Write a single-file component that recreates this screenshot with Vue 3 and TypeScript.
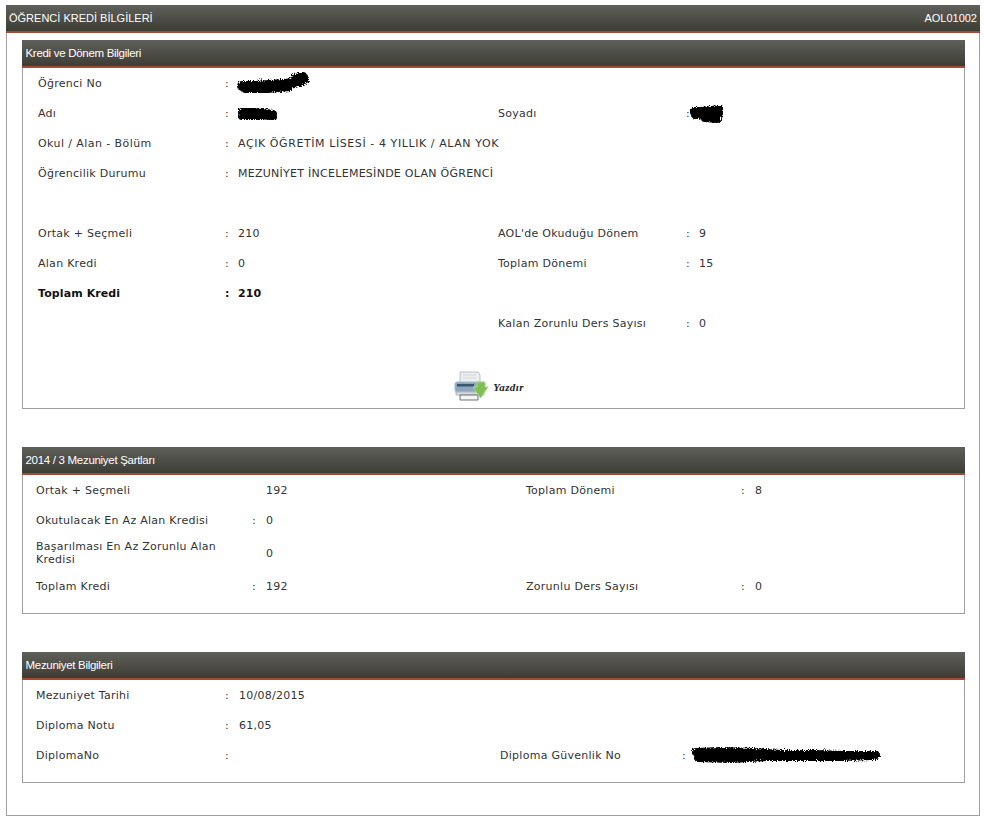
<script setup lang="ts">
interface Cell {
    label?: string;
    colon?: boolean;
    value?: string;
    blob?: string;
}
interface Row {
    left?: Cell;
    right?: Cell;
    bold?: boolean;
    tall?: boolean;
    wide?: boolean;
}

const krediRows: Row[] = [
    { left: { label: "Öğrenci No", colon: true, blob: "no" } },
    { left: { label: "Adı", colon: true, blob: "ad" }, right: { label: "Soyadı", colon: true, blob: "soyad" } },
    { left: { label: "Okul / Alan - Bölüm", colon: true, value: "AÇIK ÖĞRETİM LİSESİ - 4 YILLIK / ALAN YOK" }, wide: true },
    { left: { label: "Öğrencilik Durumu", colon: true, value: "MEZUNİYET İNCELEMESİNDE OLAN ÖĞRENCİ" } },
    {},
    {
        left: { label: "Ortak + Seçmeli", colon: true, value: "210" },
        right: { label: "AOL'de Okuduğu Dönem", colon: true, value: "9" }
    },
    {
        left: { label: "Alan Kredi", colon: true, value: "0" },
        right: { label: "Toplam Dönemi", colon: true, value: "15" }
    },
    { left: { label: "Toplam Kredi", colon: true, value: "210" }, bold: true },
    { right: { label: "Kalan Zorunlu Ders Sayısı", colon: true, value: "0" } }
];

const sartRows: Row[] = [
    {
        left: { label: "Ortak + Seçmeli", value: "192" },
        right: { label: "Toplam Dönemi", colon: true, value: "8" }
    },
    { left: { label: "Okutulacak En Az Alan Kredisi", colon: true, value: "0" } },
    { left: { label: "Başarılması En Az Zorunlu Alan Kredisi", value: "0" }, tall: true },
    {
        left: { label: "Toplam Kredi", colon: true, value: "192" },
        right: { label: "Zorunlu Ders Sayısı", colon: true, value: "0" }
    }
];

const mezunRows: Row[] = [
    { left: { label: "Mezuniyet Tarihi", colon: true, value: "10/08/2015" } },
    { left: { label: "Diploma Notu", colon: true, value: "61,05" } },
    { left: { label: "DiplomaNo", colon: true }, right: { label: "Diploma Güvenlik No", colon: true, blob: "guvenlik" } }
];

const panels = [
    { title: "Kredi ve Dönem Bilgileri", cols: "cols-a", rows: krediRows, print: true },
    { title: "2014 / 3 Mezuniyet Şartları", cols: "cols-b", rows: sartRows, print: false },
    { title: "Mezuniyet Bilgileri", cols: "cols-c", rows: mezunRows, print: false }
];

// karalanmis alanlar: genislik, yukseklik, kaydirma, cizgi
const blobs: Record<string, { w: number; h: number; x: number; d: string; sw: number }> = {
    no: { w: 74, h: 24, x: -1, d: "M5 15 L18 15 L32 14 L46 13 L58 12 L67 8 M8 17 L30 17 L52 15 M58 8 L66 6", sw: 10 },
    ad: { w: 44, h: 20, x: -1, d: "M5 9 L14 8 L24 9 L36 11 M5 13 L20 13 L36 14", sw: 8 },
    soyad: { w: 40, h: 24, x: -12, d: "M6 10 L14 10 L24 9 L33 8 M8 14 L20 13 L33 13 M18 17 L30 18", sw: 8 },
    guvenlik: { w: 190, h: 24, x: -4, d: "M5 9 L30 8 L62 9 L90 11 L124 11 L152 12 L185 12 M7 15 L40 16 L76 14 L110 14 L150 14 L183 13", sw: 8 }
};
</script>

<template>
    <div class="frame">
        <div class="main_head">
            <span>ÖĞRENCİ KREDİ BİLGİLERİ</span>
            <span>AOL01002</span>
        </div>
        <section v-for="panel in panels" :key="panel.title" class="panel" :class="panel.cols">
            <div class="panel_head">{{ panel.title }}</div>
            <div
                v-for="(row, i) in panel.rows"
                :key="i"
                class="row"
                :class="{ bold: row.bold, tall: row.tall, wide: row.wide }"
            >
                <template v-for="cell in [row.left, row.right]">
                    <span class="label">{{ cell?.label }}</span>
                    <span class="colon">{{ cell?.colon ? ":" : "" }}</span>
                    <span class="value">
                        {{ cell?.value }}
                        <svg
                            v-if="cell?.blob"
                            :width="blobs[cell.blob].w"
                            :height="blobs[cell.blob].h"
                            :style="{ marginLeft: blobs[cell.blob].x + 'px' }"
                        >
                            <path
                                :d="blobs[cell.blob].d"
                                :stroke-width="blobs[cell.blob].sw"
                                fill="none"
                                stroke="#000"
                                stroke-linecap="round"
                                stroke-linejoin="round"
                                filter="url(#rough)"
                            />
                        </svg>
                    </span>
                </template>
            </div>
            <div v-if="panel.print" class="print">
                <svg class="printer" width="38" height="32" viewBox="0 0 38 32">
                    <path d="M7 1 H25 L27 4 V12 H7 Z" fill="#eceef0" stroke="#bcc0c4" />
                    <path d="M10 4 H23 M10 7 H23" stroke="#d4d7da" />
                    <rect x="2" y="11" width="30" height="10" rx="2" fill="#8aa6c0" stroke="#a8bccd" />
                    <rect x="4" y="13" width="17" height="2.5" fill="#3c566f" />
                    <path d="M3 21 H31 V24 H3 Z" fill="#d8dcdf" stroke="#aeb3b8" />
                    <path d="M7 24 H25 V29 H7 Z" fill="#f4f5f6" stroke="#6c7074" />
                    <path d="M24 11 H32 V16 H35 L27.5 27 L20 16 H24 Z" fill="#7fbe50" stroke="#a8da88" />
                </svg>
                <span>Yazdır</span>
            </div>
        </section>
    </div>
    <svg class="defs" width="0" height="0">
        <filter id="rough" x="-10%" y="-40%" width="120%" height="180%">
            <feTurbulence type="fractalNoise" baseFrequency="0.9" numOctaves="2" seed="4" />
            <feDisplacementMap in="SourceGraphic" scale="6" />
        </filter>
    </svg>
</template>

<style>
body {
    background: #fff;
}
</style>

<style scoped>
.frame {
    box-sizing: border-box;
    width: 974px;
    height: 811px;
    margin: 5px 0 0 6px;
    border: 1px solid #a0a0a0;
    border-top: none;
    font-family: "DejaVu Sans", Verdana, sans-serif;
    font-size: 11px;
    letter-spacing: 0.27px;
    color: #333;
}
.main_head,
.panel_head {
    box-sizing: border-box;
    display: flex;
    align-items: center;
    background: linear-gradient(#60605a, #3d3d36);
    border-bottom: 2px solid #a24a33;
    color: #fff;
    font-family: "Liberation Sans", Arial, sans-serif;
    letter-spacing: 0;
}
.main_head {
    justify-content: space-between;
    height: 28px;
    margin: 0 -1px;
    padding: 0 3px;
    font-size: 11px;
}
.panel_head {
    height: 28px;
    margin: -1px -1px 0;
    padding: 0 3.5px;
    font-size: 11.5px;
    letter-spacing: -0.3px;
}
.panel {
    box-sizing: border-box;
    width: 943px;
    margin: 38px 0 0 15px;
    border: 1px solid #a0a0a0;
}
.main_head + .panel {
    margin-top: 7px;
}
.row {
    display: grid;
    align-items: center;
    height: 30px;
}
.row.tall {
    height: 36px;
    line-height: 13px;
}
.row.bold {
    font-weight: bold;
    letter-spacing: 0.1px;
    color: #111;
}
.row.wide .label {
    letter-spacing: 0.42px;
}
.row.wide .value {
    letter-spacing: 0.58px;
}
.cols-a .row {
    padding-left: 15px;
    grid-template-columns: 187px 13px 260px 188px 13px 1fr;
}
.cols-b .row {
    padding-left: 13px;
    grid-template-columns: 216px 14px 260px 215px 14px 1fr;
}
.cols-b {
    padding-bottom: 12px;
}
.cols-c .row {
    padding-left: 13px;
    grid-template-columns: 189px 14px 261px 182px 13px 1fr;
}
.cols-c {
    padding-bottom: 12px;
}
.value {
    display: flex;
    align-items: center;
    white-space: nowrap;
    height: 100%;
}
.print {
    box-sizing: border-box;
    display: flex;
    align-items: center;
    justify-content: center;
    height: 70px;
    gap: 2px;
    padding: 28px 10px 0 0;
    font-family: "Liberation Serif", "Times New Roman", serif;
    font-weight: bold;
    font-style: italic;
    font-size: 11px;
    letter-spacing: 0.4px;
    color: #222;
}
.printer {
    filter: blur(0.4px);
}
.defs {
    position: absolute;
}
</style>
